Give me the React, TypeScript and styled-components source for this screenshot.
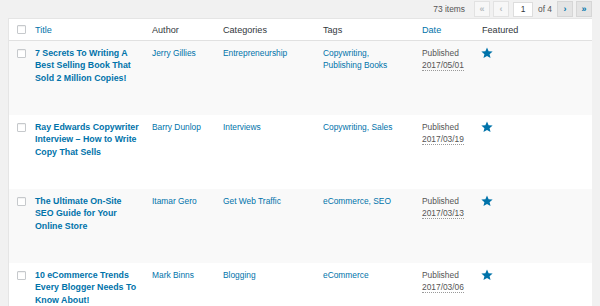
import React from "react";
import styled, { createGlobalStyle } from "styled-components";

const Global = createGlobalStyle`
  html, body { margin: 0; padding: 0; background: #f1f1f1; }
  body { font-family: "Liberation Sans", Arial, sans-serif; color: #32373c; }
`;

const Page = styled.div`
  width: 600px;
  height: 306px;
  overflow: hidden;
  padding: 0 8px;
  box-sizing: border-box;
`;

const NavBar = styled.div`
  height: 18px;
  display: flex;
  justify-content: flex-end;
  align-items: center;
  gap: 3px;
  font-size: 8.4px;
  color: #555;
`;

const Count = styled.span`
  margin-right: 6px;
`;

const PageButton = styled.span<{ $disabled?: boolean }>`
  width: 16px;
  height: 16px;
  box-sizing: border-box;
  display: flex;
  align-items: center;
  justify-content: center;
  border: 1px solid ${(p) => (p.$disabled ? "#e2e2e2" : "#d6d6d6")};
  background: ${(p) => (p.$disabled ? "#f7f7f7" : "#e4e4e4")};
  color: ${(p) => (p.$disabled ? "#b4b9be" : "#0073aa")};
  font-size: 9px;
  font-weight: bold;
  line-height: 1;
`;

const PageInput = styled.span`
  width: 20px;
  height: 15px;
  box-sizing: border-box;
  margin-left: 1px;
  display: flex;
  align-items: center;
  justify-content: center;
  background: #fff;
  border: 1px solid #ddd;
  color: #32373c;
  font-size: 8.4px;
`;

const OfText = styled.span`
  margin: 0 2px;
`;

const Table = styled.div`
  background: #fff;
  border: 1px solid #e5e5e5;
  border-right: none;
  box-sizing: border-box;
`;

const cols = "22px 117px 71px 100px 99px 60px 114px";

const HeadRow = styled.div`
  display: grid;
  grid-template-columns: ${cols};
  height: 21px;
  align-items: center;
  border-bottom: 1px solid #e1e1e1;
  background: #fff;
`;

const Row = styled.div<{ $alt?: boolean }>`
  display: grid;
  grid-template-columns: ${cols};
  height: 74px;
  align-items: start;
  background: ${(p) => (p.$alt ? "#f9f9f9" : "#fff")};
  padding-top: 6px;
  box-sizing: border-box;
`;

const HeadCell = styled.div<{ $link?: boolean }>`
  padding-left: 4px;
  font-size: 9.1px;
  color: ${(p) => (p.$link ? "#0073aa" : "#32373c")};
`;

const Cell = styled.div<{ $right?: number }>`
  padding-left: 4px;
  padding-right: ${(p) => p.$right ?? 4}px;
  font-size: 8.4px;
  line-height: 12.3px;
  color: #0073aa;
`;

const TitleCell = styled(Cell)`
  font-weight: bold;
  font-size: 8.8px;
  padding-right: 9px;
`;

const DateCell = styled(Cell)`
  color: #555;
`;

const Abbr = styled.span`
  border-bottom: 1px dotted #999;
`;

const CheckCell = styled.div<{ $top?: number }>`
  padding-left: 8px;
  padding-top: ${(p) => p.$top ?? 0}px;
  display: flex;
`;

const Box = styled.span`
  width: 9px;
  height: 9px;
  box-sizing: border-box;
  border: 1px solid #c6c9cc;
  border-radius: 1px;
  background: #fff;
  box-shadow: inset 0 1px 1px rgba(0, 0, 0, 0.06);
`;

const StarCell = styled.div`
  padding-left: 3px;
  padding-top: 0;
  display: flex;
  svg {
    display: block;
  }
`;

const Star = () => (
  <svg width="12" height="12" viewBox="0 0 20 20">
    <path
      fill="#0073aa"
      d="M10 .8l2.7 6.2 6.7.5-5.1 4.4 1.6 6.6L10 15l-5.9 3.5 1.6-6.6L.6 7.5l6.7-.5z"
    />
  </svg>
);

const posts = [
  {
    title: "7 Secrets To Writing A Best Selling Book That Sold 2 Million Copies!",
    author: "Jerry Gillies",
    cat: "Entrepreneurship",
    tags: "Copywriting, Publishing Books",
    date: "2017/05/01",
  },
  {
    title: "Ray Edwards Copywriter Interview – How to Write Copy That Sells",
    author: "Barry Dunlop",
    cat: "Interviews",
    tags: "Copywriting, Sales",
    date: "2017/03/19",
  },
  {
    title: "The Ultimate On-Site SEO Guide for Your Online Store",
    author: "Itamar Gero",
    cat: "Get Web Traffic",
    tags: "eCommerce, SEO",
    date: "2017/03/13",
  },
  {
    title: "10 eCommerce Trends Every Blogger Needs To Know About!",
    author: "Mark Binns",
    cat: "Blogging",
    tags: "eCommerce",
    date: "2017/03/06",
  },
];

export default function App() {
  return (
    <>
      <Global />
      <Page>
        <NavBar>
          <Count>73 items</Count>
          <PageButton $disabled>«</PageButton>
          <PageButton $disabled>‹</PageButton>
          <PageInput>1</PageInput>
          <OfText>of 4</OfText>
          <PageButton>›</PageButton>
          <PageButton>»</PageButton>
        </NavBar>
        <Table>
          <HeadRow>
            <CheckCell>
              <Box />
            </CheckCell>
            <HeadCell $link>Title</HeadCell>
            <HeadCell>Author</HeadCell>
            <HeadCell>Categories</HeadCell>
            <HeadCell>Tags</HeadCell>
            <HeadCell $link>Date</HeadCell>
            <HeadCell>Featured</HeadCell>
          </HeadRow>
          {posts.map((p, i) => (
            <Row key={p.date} $alt={i % 2 === 0}>
              <CheckCell $top={2}>
                <Box />
              </CheckCell>
              <TitleCell>{p.title}</TitleCell>
              <Cell>{p.author}</Cell>
              <Cell>{p.cat}</Cell>
              <Cell $right={18}>{p.tags}</Cell>
              <DateCell>
                Published
                <br />
                <Abbr>{p.date}</Abbr>
              </DateCell>
              <StarCell>
                <Star />
              </StarCell>
            </Row>
          ))}
        </Table>
      </Page>
    </>
  );
}
